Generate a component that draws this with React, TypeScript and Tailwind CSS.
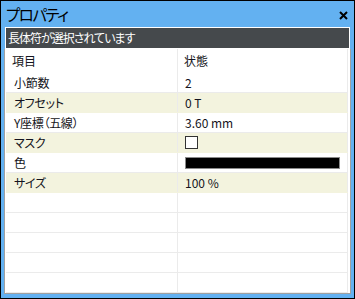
import React from "react";

const ROWS: { label: string; value?: React.ReactNode; alt?: boolean }[] = [
  { label: "小節数", value: "2" },
  { label: "オフセット", value: "0 T", alt: true },
  { label: "Y座標（五線）", value: "3.60 mm" },
  {
    label: "マスク",
    value: <span className="block w-[13px] h-[13px] border border-[#333] bg-white" />,
    alt: true,
  },
  {
    label: "色",
    value: <span className="block w-[155px] h-[12px] border border-[#8a8a8a] bg-black" />,
  },
  { label: "サイズ", value: "100 %", alt: true },
  { label: "" },
  { label: "" },
  { label: "" },
  { label: "" },
  { label: "" },
];

export default function App() {
  return (
    <div
      className="w-[355px] h-[299px] bg-[#63b1f1] border border-black flex flex-col [font-feature-settings:'palt']"
      style={{ fontFamily: '"Noto Sans CJK JP", "Noto Sans", sans-serif' }}
    >
      {/* title bar */}
      <div className="h-[26px] flex items-center pl-[5px] pr-[6px] shrink-0">
        <span className="text-[15.5px] leading-none text-black tracking-[-1.5px] pt-[2px]">
          プロパティ
        </span>
        <svg className="ml-auto mt-[2px]" width="9" height="9" viewBox="0 0 9 9">
          <path d="M1 1 L8 8 M8 1 L1 8" stroke="#000" strokeWidth="2" />
        </svg>
      </div>

      {/* status */}
      <div className="ml-[4px] w-[345px] h-[22px] bg-[#45494c] border border-white flex items-center pl-[2px] shrink-0">
        <span className="text-[12px] leading-none text-white tracking-[-1px]">
          長体符が選択されています
        </span>
      </div>

      {/* property grid */}
      <div className="ml-[3px] w-[347px] h-[245px] border-x border-b border-[#a0a0a0] bg-white pl-px pr-[2px] text-[12px] text-[#141420] shrink-0">
        <div className="flex h-[24px]">
          <div className="w-[172px] border-r border-[#ebebeb] pl-[6px] flex items-center">
            <span>項目</span>
          </div>
          <div className="flex-1 border-r border-[#ebebeb] pl-[6px] flex items-center">
            <span>状態</span>
          </div>
        </div>
        {ROWS.map((r, i) => (
          <div
            key={i}
            className={`flex h-[20px] border-b ${
              r.alt ? "bg-[#f3f3de] border-[#f3f3de]" : "border-[#ebebeb]"
            }`}
          >
            <div className="w-[172px] border-r border-[#ebebeb] pl-[8px] flex items-center">
              <span className="tracking-[-0.3px]">{r.label}</span>
            </div>
            <div className="flex-1 border-r border-[#ebebeb] pl-[7px] flex items-center">
              {r.value}
            </div>
          </div>
        ))}
      </div>
    </div>
  );
}
